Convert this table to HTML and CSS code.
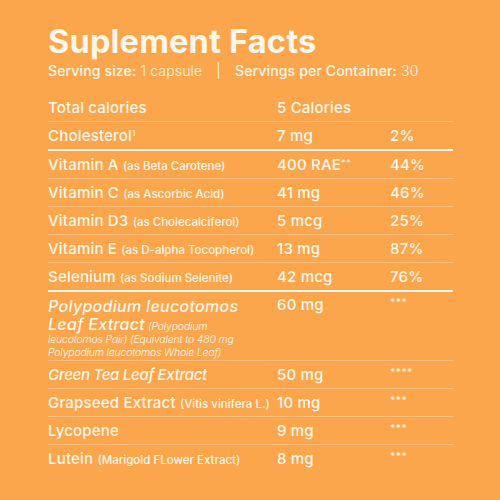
FILE: index.html
```html
<!DOCTYPE html>
<html>
<head>
<meta charset="utf-8">
<link rel="stylesheet" href="styles.css">
</head>
<body>
<main class="panel">
  <h1 class="title">Suplement Facts</h1>
  <p class="serving"><b>Serving size:</b> 1 capsule <span class="sep">|</span> <b>Servings per Container:</b> 30</p>
  <div class="table">
    <div class="row"><div class="name">Total calories</div><div class="amt">5 Calories</div><div class="dv"></div></div>
    <div class="row thick"><div class="name">Cholesterol<sup>1</sup></div><div class="amt">7 mg</div><div class="dv">2%</div></div>
    <div class="row"><div class="name">Vitamin A <small>(as Beta Carotene)</small></div><div class="amt">400 RAE<sup>**</sup></div><div class="dv">44%</div></div>
    <div class="row"><div class="name">Vitamin C <small>(as Ascorbic Acid)</small></div><div class="amt">41 mg</div><div class="dv">46%</div></div>
    <div class="row"><div class="name">Vitamin D3 <small>(as Cholecalciferol)</small></div><div class="amt">5 mcg</div><div class="dv">25%</div></div>
    <div class="row"><div class="name">Vitamin E <small>(as D-alpha Tocopherol)</small></div><div class="amt">13 mg</div><div class="dv">87%</div></div>
    <div class="row thick"><div class="name">Selenium <small>(as Sodium Selenite)</small></div><div class="amt">42 mcg</div><div class="dv">76%</div></div>
    <div class="row tall"><div class="name"><i class="big">Polypodium leucotomos<br>Leaf Extract</i> <em class="note">(Polypodium<br>leucotomos Pair) (Equivalent to 480 mg<br>Polypodium leucotomos Whole Leaf)</em></div><div class="amt">60 mg</div><div class="dv star">***</div></div>
    <div class="row"><div class="name"><i class="mid">Green Tea Leaf Extract</i></div><div class="amt">50 mg</div><div class="dv star">****</div></div>
    <div class="row"><div class="name">Grapseed Extract <small>(Vitis vinifera L.)</small></div><div class="amt">10 mg</div><div class="dv star">***</div></div>
    <div class="row"><div class="name">Lycopene</div><div class="amt">9 mg</div><div class="dv star">***</div></div>
    <div class="row last"><div class="name">Lutein <small>(Marigold FLower Extract)</small></div><div class="amt">8 mg</div><div class="dv star">***</div></div>
  </div>
</main>
</body>
</html>
```

FILE: styles.css
```css
html, body {
  margin: 0;
  padding: 0;
  background: #fba64d;
}
body {
  width: 500px;
  height: 500px;
  overflow: hidden;
  font-family: Inter, "Liberation Sans", sans-serif;
  color: #fff7ea;
}
.panel {
  padding: 23px 0 0 48px;
  width: 405px;
}
.title {
  margin: 0;
  font-size: 32.5px;
  font-weight: 700;
  line-height: 38px;
  letter-spacing: 0.2px;
}
.serving {
  margin: 1px 0 0;
  font-size: 14px;
  line-height: 18px;
  font-weight: 300;
  letter-spacing: 0.15px;
}
.serving b {
  font-weight: 500;
}
.sep {
  margin: 0 10px;
  font-weight: 300;
}
.table {
  margin-top: 14px;
}
.row {
  display: grid;
  grid-template-columns: 229px 113px 63px;
  align-items: start;
  border-bottom: 1px solid rgba(255, 255, 255, 0.28);
  padding: 6px 0 5px;
  font-size: 15px;
  line-height: 16px;
  font-weight: 500;
  letter-spacing: 0.2px;
}
.row.thick {
  border-bottom: 2px solid #fff8ee;
}
.row.last {
  border-bottom: none;
}
.row.tall {
  padding: 5px 0 1px;
}
.row.tall .name {
  font-size: 10px;
  line-height: 13px;
}
.name small {
  font-size: 11.5px;
  line-height: 1;
  font-weight: 500;
  letter-spacing: 0;
}
.name sup {
  font-size: 8px;
  vertical-align: 5px;
  line-height: 0;
}
.amt sup {
  font-size: 9px;
  vertical-align: 4px;
  line-height: 0;
}
.name i {
  font-style: italic;
  font-weight: 500;
}
.name i.big {
  font-size: 16px;
  line-height: 18px;
  letter-spacing: 0.3px;
}
.name i.mid {
  font-size: 15px;
  letter-spacing: -0.3px;
}
.note {
  font-size: 10.5px;
  line-height: 13px;
  font-weight: 300;
  font-style: italic;
  letter-spacing: -0.2px;
}
.dv.star {
  font-size: 10px;
  line-height: 10px;
  letter-spacing: 0.5px;
}
```
